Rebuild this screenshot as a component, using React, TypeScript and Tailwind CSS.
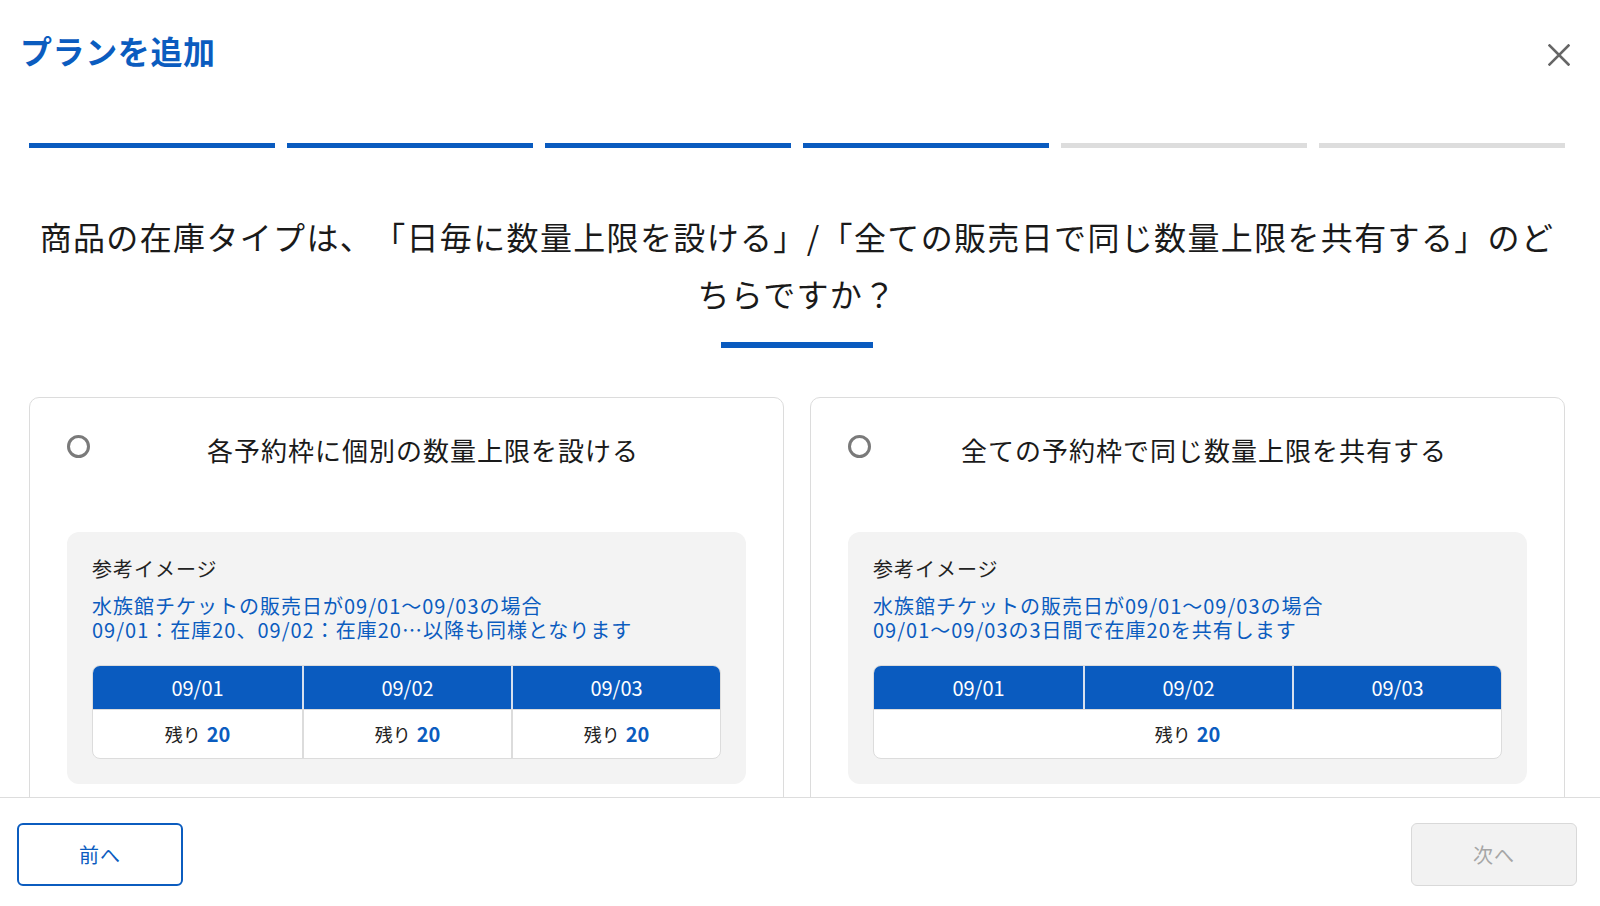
const BLUE = 'text-[#0b5cbf]'

const days = ['09/01', '09/02', '09/03']

function Radio() {
  return (
    <span className="mt-[3px] block size-[23px] shrink-0 rounded-full border-[3px] border-[#7a7a7a] bg-white" />
  )
}

function Remaining() {
  return (
    <span className="inline-flex items-baseline gap-[6px]">
      <span className="text-[18px] text-[#222]">残り</span>
      <span className={`text-[20px] font-bold ${BLUE}`}>20</span>
    </span>
  )
}

function DayTable({ shared }: { shared: boolean }) {
  return (
    <div className="overflow-hidden rounded-[8px] border border-[#dcdcdc] bg-white">
      <div className="grid h-[43px] grid-cols-3 bg-[#0a5bbf]">
        {days.map((d, i) => (
          <div
            key={d}
            className={`flex items-center justify-center text-[20px] text-white ${i > 0 ? 'border-l-2 border-[#d6e0ee]' : ''}`}
          >
            {d}
          </div>
        ))}
      </div>
      {shared ? (
        <div className="flex h-[49px] items-center justify-center border-t border-[#dcdcdc]">
          <Remaining />
        </div>
      ) : (
        <div className="grid h-[49px] grid-cols-3 border-t border-[#dcdcdc]">
          {days.map((d, i) => (
            <div
              key={d}
              className={`flex items-center justify-center ${i > 0 ? 'border-l-2 border-[#dcdcdc]' : ''}`}
            >
              <Remaining />
            </div>
          ))}
        </div>
      )}
    </div>
  )
}

function OptionCard({
  title,
  lines,
  shared,
}: {
  title: string
  lines: string[]
  shared: boolean
}) {
  return (
    <div className="rounded-[10px] border border-[#dcdcdc] bg-white px-[37px] pt-[34px] pb-[30px]">
      <div className="flex items-start">
        <Radio />
        <div className="flex-1 pl-[10px] text-center text-[26px] leading-[36px] tracking-[1px] text-[#1a1a1a]">
          {title}
        </div>
      </div>

      <div className="mt-[64px] rounded-[12px] bg-[#f3f3f3] px-[25px] pt-[23px] pb-[25px]">
        <div className="text-[20px] leading-[28px] tracking-[1px] text-[#222]">参考イメージ</div>
        <div className={`mt-[11px] text-[20px] leading-[24px] tracking-[1px] ${BLUE}`}>
          {lines.map((l) => (
            <div key={l}>{l}</div>
          ))}
        </div>
        <div className="mt-[23px]">
          <DayTable shared={shared} />
        </div>
      </div>
    </div>
  )
}

export default function App() {
  return (
    <div className="flex h-[906px] w-[1600px] flex-col overflow-hidden bg-white font-['Noto_Sans_CJK_JP','Noto_Sans',sans-serif] [text-spacing-trim:space-all]">
      {/* Header */}
      <div className="flex items-start justify-between pt-[26px] pl-[20px] pr-[30px]">
        <h1 className={`text-[32px] leading-[48px] font-bold tracking-[0.6px] ${BLUE}`}>プランを追加</h1>
        <button type="button" aria-label="閉じる" className="mt-[18px] text-[#666]">
          <svg width="22" height="22" viewBox="0 0 22 22" fill="none">
            <path d="M1.5 1.5 L20.5 20.5 M20.5 1.5 L1.5 20.5" stroke="currentColor" strokeWidth="2.6" strokeLinecap="square" />
          </svg>
        </button>
      </div>

      {/* Steps */}
      <div className="mt-[69px] grid grid-cols-6 gap-[12px] pl-[29px] pr-[35px]">
        {[0, 1, 2, 3, 4, 5].map((i) => (
          <div key={i} className={`h-[5px] ${i < 4 ? 'bg-[#0a5bbf]' : 'bg-[#dddddd]'}`} />
        ))}
      </div>

      {/* Body */}
      <div className="min-h-0 flex-1 overflow-hidden pl-[29px] pr-[35px]">
        <p className="mt-[60px] text-center text-[32px] leading-[57px] tracking-[1.35px] text-[#1a1a1a]">
          商品の在庫タイプは、「日毎に数量上限を設ける」/「全ての販売日で同じ数量上限を共有する」のど
          <br />
          ちらですか？
        </p>
        <div className="mx-auto mt-[20px] h-[6px] w-[152px] bg-[#0a5bbf]" />

        <div className="mt-[49px] grid grid-cols-2 gap-[26px]">
          <OptionCard
            title="各予約枠に個別の数量上限を設ける"
            lines={['水族館チケットの販売日が09/01〜09/03の場合', '09/01：在庫20、09/02：在庫20…以降も同様となります']}
            shared={false}
          />
          <OptionCard
            title="全ての予約枠で同じ数量上限を共有する"
            lines={['水族館チケットの販売日が09/01〜09/03の場合', '09/01〜09/03の3日間で在庫20を共有します']}
            shared
          />
        </div>
      </div>

      {/* Footer */}
      <div className="flex h-[109px] shrink-0 items-start justify-between border-t border-[#dddddd] bg-white pt-[25px] pl-[17px] pr-[23px]">
        <button
          type="button"
          className={`flex h-[63px] w-[166px] items-center justify-center rounded-[6px] border-2 border-[#0b5cbf] bg-white text-[20px] tracking-[1px] ${BLUE}`}
        >
          前へ
        </button>
        <button
          type="button"
          disabled
          className="flex h-[63px] w-[166px] items-center justify-center rounded-[6px] border-[1.5px] border-[#d9d9d9] bg-[#f2f2f2] text-[20px] tracking-[1px] text-[#a6a6a6]"
        >
          次へ
        </button>
      </div>
    </div>
  )
}
